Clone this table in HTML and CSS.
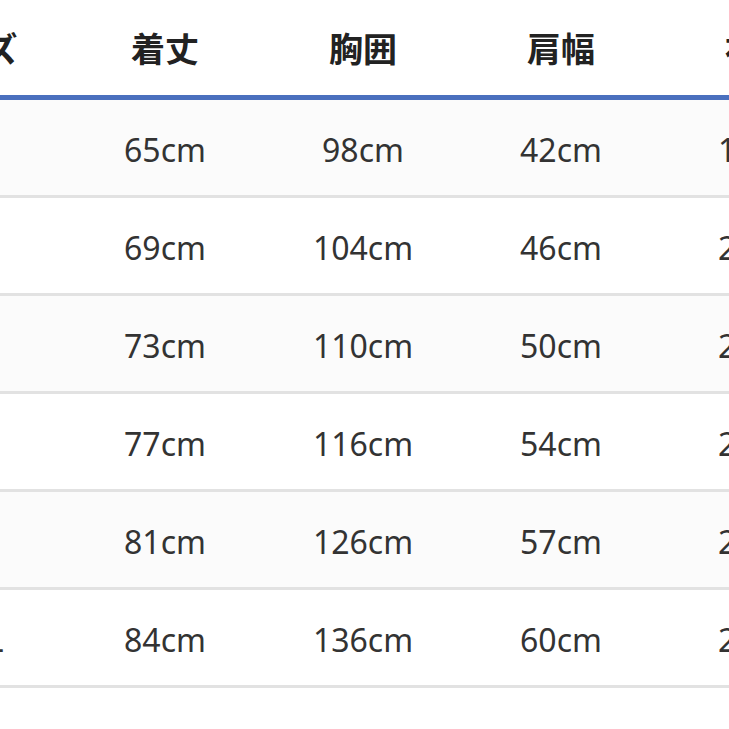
FILE: index.html
```html
<!DOCTYPE html>
<html lang="ja">
<head>
<meta charset="utf-8">
<link rel="stylesheet" href="styles.css">
</head>
<body>
<div class="viewport">
  <table class="size-table">
    <thead>
      <tr><th>サイズ</th><th>着丈</th><th>胸囲</th><th>肩幅</th><th>袖丈</th></tr>
    </thead>
    <tbody>
      <tr><td>S</td><td>65cm</td><td>98cm</td><td>42cm</td><td>19cm</td></tr>
      <tr><td>M</td><td>69cm</td><td>104cm</td><td>46cm</td><td>20cm</td></tr>
      <tr><td>L</td><td>73cm</td><td>110cm</td><td>50cm</td><td>21cm</td></tr>
      <tr><td>XL</td><td>77cm</td><td>116cm</td><td>54cm</td><td>22cm</td></tr>
      <tr><td>XXL</td><td>81cm</td><td>126cm</td><td>57cm</td><td>23cm</td></tr>
      <tr><td>XXXL</td><td>84cm</td><td>136cm</td><td>60cm</td><td>24cm</td></tr>
    </tbody>
  </table>
</div>
</body>
</html>
```

FILE: styles.css
```css
html, body {
  margin: 0;
  padding: 0;
  background: #ffffff;
}
.viewport {
  width: 729px;
  height: 729px;
  overflow: hidden;
}
.size-table {
  margin-left: -132px;
  border-collapse: collapse;
  table-layout: fixed;
  width: 990px;
  font-family: "Noto Sans", "Noto Sans CJK JP", sans-serif;
}
.size-table th,
.size-table td {
  width: 198px;
  padding: 0;
  text-align: center;
}
.size-table th {
  height: 95px;
  font-family: "Noto Sans CJK JP", sans-serif;
  font-weight: 700;
  font-size: 34px;
  color: #222222;
  border-bottom: 5px solid #4a70be;
}
.size-table td {
  height: 92px;
  padding-top: 3px;
  font-size: 32px;
  color: #333333;
  border-bottom: 3px solid #e2e2e2;
}
.size-table tbody tr:nth-child(odd) td {
  background: #fbfbfb;
}
```
